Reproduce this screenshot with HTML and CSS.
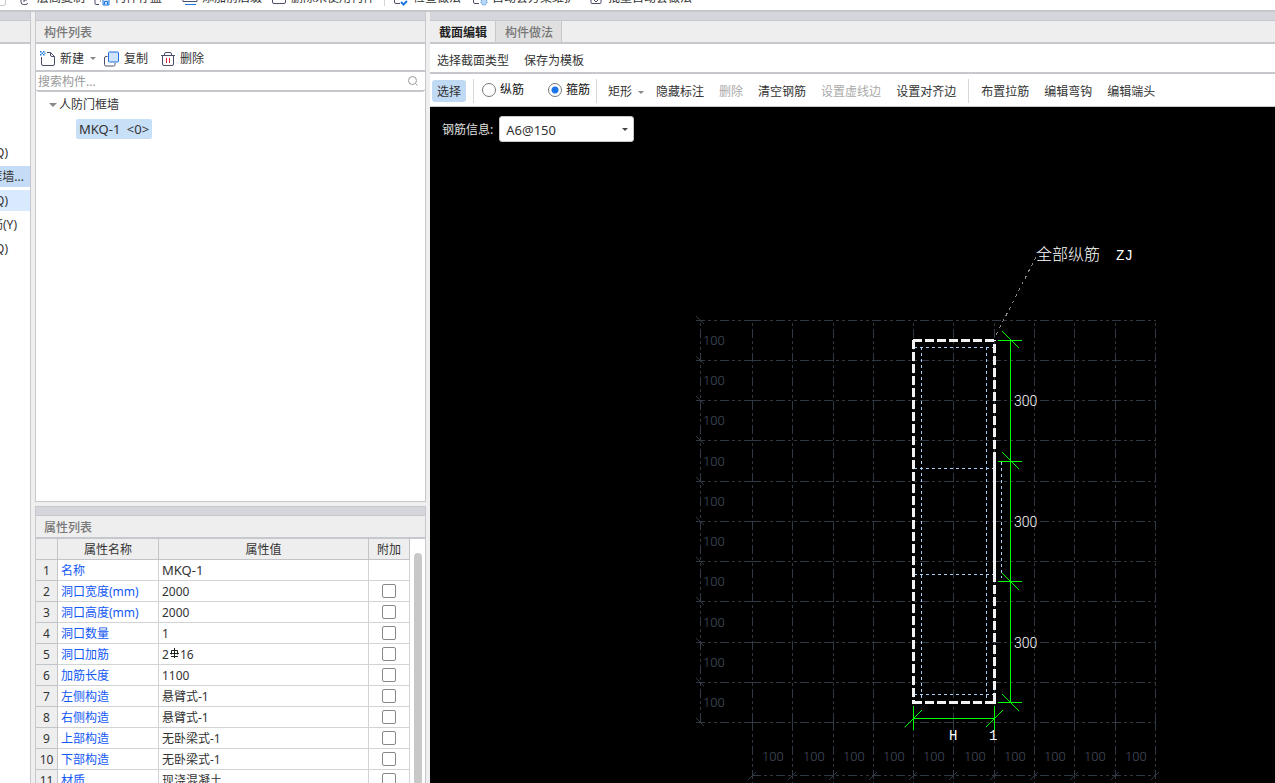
FILE: index.html
```
<!DOCTYPE html>
<html lang="zh-CN">
<head>
<meta charset="utf-8">
<title>截面编辑</title>
<link rel="stylesheet" href="styles.css">
</head>
<body>
<header class="ribbon">
  <span class="ribbon-edge"></span>
  <button class="ribbon-item"><svg class="ricon" viewBox="0 0 16 16"><path d="M4 5v7q0 2.500 2.500 2.500h2q2 0 2-1.500M10 10h-3v2"/></svg>层高复制</button>
  <button class="ribbon-item"><svg class="ricon" viewBox="0 0 16 16"><path d="M1 8v5.500q0 1 1 1h3M6 11h1"/><path class="blue tint" d="M9 6.500h6v8.500H9zM10.500 14.500v-3h3v3"/></svg>构件存盘</button>
  <button class="ribbon-item gap-lg"><svg class="ricon" viewBox="0 0 16 16"><path d="M1 9v2.500h14V9"/><path class="blue" d="M3 14.500h11"/></svg>添加前后缀</button>
  <button class="ribbon-item"><svg class="ricon" viewBox="0 0 16 16"><path d="M1.500 6v6q0 1.500 1.500 1.500h10q1.500 0 1.500-1.500V6"/></svg>删除未使用构件</button>
  <span class="ribbon-sep"></span>
  <button class="ribbon-item"><svg class="ricon" viewBox="0 0 16 16"><path d="M1.500 6v6q0 1.500 1.500 1.500h4"/><path class="blue thick" d="M8 12l2.500 2.500L14 11"/></svg>检查做法</button>
  <button class="ribbon-item gap-sm"><svg class="ricon" viewBox="0 0 16 16"><path d="M1.500 6v6q0 1.500 1.500 1.500h4"/><circle class="blue soft" cx="12" cy="12" r="3"/></svg>自动套方案维护</button>
  <button class="ribbon-item gap-md"><svg class="ricon" viewBox="0 0 16 16"><path d="M3 6v6.500q0 1 1 1h8q1 0 1-1V6M6 10l2 2 2-2"/></svg>批量自动套做法</button>
</header>

<main class="workspace">
  <aside class="nav-panel">
    <div class="grip"></div>
    <div class="panel-head"></div>
    <ul class="nav-list">
      <li class="nav-row">(Q)</li>
      <li class="nav-row current in-wide">框墙...</li>
      <li class="nav-row hover">(Q)</li>
      <li class="nav-row in-mid">筋(Y)</li>
      <li class="nav-row">(Q)</li>
    </ul>
  </aside>

  <div class="side">
    <section class="panel component-panel">
      <div class="grip"></div>
      <h2 class="panel-head">构件列表</h2>
      <div class="tools">
        <button class="tool"><svg class="icon" viewBox="0 0 16 16"><path class="ink" d="M1.500 6v7q0 1.500 1.500 1.500h10q1.500 0 1.500-1.500V5.500L10.500 1.500H7M10.500 1.500V4q0 1.500 1.500 1.500h2.500"/><path class="checks" d="M0 0h1.500v1.500H0zM3 0h1.500v1.500H3zM1.500 1.500H3V3H1.500zM0 3h1.500v1.500H0zM3 3h1.500v1.500H3zM4.500 1.500h1V3h-1z"/></svg>新建<i class="caret"></i></button>
        <button class="tool"><svg class="icon" viewBox="0 0 16 16"><path class="ink" d="M3.500 5.500H2Q.500 5.500.500 7v6.500Q.500 15 2 15h7.500q1.500 0 1.500-1.500V12"/><rect class="copy-front" x="4.500" y="1" width="10" height="10" rx="1"/></svg>复制</button>
        <button class="tool tool-delete"><svg class="icon" viewBox="0 0 16 16"><path class="ink" d="M1 4.500h14M4.500 4.500V3q0-1.500 1.500-1.500h4q1.500 0 1.500 1.500v1.500M2.500 4.500V13q0 1.500 1.500 1.500h8q1.500 0 1.500-1.500V4.500"/><path class="red" d="M6.500 7v5M9.500 7v5"/></svg>删除</button>
      </div>
      <label class="search">
        <input class="search-input" type="text" placeholder="搜索构件..." aria-label="搜索构件">
        <svg class="search-icon" viewBox="0 0 12 12"><circle cx="5.500" cy="5.500" r="4"/><path d="M8.500 8.500l2 2"/></svg>
      </label>
      <ul class="tree">
        <li class="tree-row"><i class="caret caret-tree"></i>人防门框墙</li>
        <li class="tree-row tree-child"><span class="chip">MKQ-1&ensp;&lt;0&gt;</span></li>
      </ul>
    </section>

    <section class="panel property-panel">
      <div class="grip"></div>
      <h2 class="panel-head">属性列表</h2>
      <div class="sheet-wrap">
        <table class="sheet">
          <colgroup><col class="c-num"><col class="c-name"><col class="c-value"><col class="c-extra"></colgroup>
          <thead><tr><th></th><th>属性名称</th><th>属性值</th><th>附加</th></tr></thead>
          <tbody>
            <tr><th>1</th><td class="name">名称</td><td class="latin">MKQ-1</td><td></td></tr>
            <tr><th>2</th><td class="name">洞口宽度(mm)</td><td>2000</td><td class="extra"><input type="checkbox" aria-label="附加 洞口宽度"></td></tr>
            <tr><th>3</th><td class="name">洞口高度(mm)</td><td>2000</td><td class="extra"><input type="checkbox" aria-label="附加 洞口高度"></td></tr>
            <tr><th>4</th><td class="name">洞口数量</td><td>1</td><td class="extra"><input type="checkbox" aria-label="附加 洞口数量"></td></tr>
            <tr><th>5</th><td class="name">洞口加筋</td><td>2<svg class="rebar" viewBox="0 0 11 11"><path d="M5.500 0v10M2 8.500h7M2.500 2.500h6M1 5.500h9M2.500 2.500v4M8.500 2.500v4"/></svg>16</td><td class="extra"><input type="checkbox" aria-label="附加 洞口加筋"></td></tr>
            <tr><th>6</th><td class="name">加筋长度</td><td>1100</td><td class="extra"><input type="checkbox" aria-label="附加 加筋长度"></td></tr>
            <tr><th>7</th><td class="name">左侧构造</td><td>悬臂式-1</td><td class="extra"><input type="checkbox" aria-label="附加 左侧构造"></td></tr>
            <tr><th>8</th><td class="name">右侧构造</td><td>悬臂式-1</td><td class="extra"><input type="checkbox" aria-label="附加 右侧构造"></td></tr>
            <tr><th>9</th><td class="name">上部构造</td><td>无卧梁式-1</td><td class="extra"><input type="checkbox" aria-label="附加 上部构造"></td></tr>
            <tr><th>10</th><td class="name">下部构造</td><td>无卧梁式-1</td><td class="extra"><input type="checkbox" aria-label="附加 下部构造"></td></tr>
            <tr><th>11</th><td class="name">材质</td><td>现浇混凝土</td><td class="extra"><input type="checkbox" aria-label="附加 材质"></td></tr>
          </tbody>
        </table>
        <div class="scroll-track"><div class="scroll-thumb"></div></div>
      </div>
    </section>
  </div>

  <section class="editor">
    <div class="grip"></div>
    <div class="tabs" role="tablist">
      <button class="tab active" role="tab">截面编辑</button>
      <button class="tab" role="tab">构件做法</button>
    </div>
    <div class="bar bar-top">
      <button class="cmd">选择截面类型</button>
      <button class="cmd">保存为模板</button>
    </div>
    <div class="bar bar-main">
      <button class="cmd pressed">选择</button>
      <span class="sep"></span>
      <label class="radio"><input type="radio" name="kind">纵筋</label>
      <label class="radio"><input type="radio" name="kind" checked>箍筋</label>
      <span class="sep sep-tight"></span>
      <button class="cmd">矩形<i class="caret"></i></button>
      <button class="cmd">隐藏标注</button>
      <button class="cmd" disabled>删除</button>
      <button class="cmd">清空钢筋</button>
      <button class="cmd" disabled>设置虚线边</button>
      <button class="cmd">设置对齐边</button>
      <span class="sep sep-wide"></span>
      <button class="cmd">布置拉筋</button>
      <button class="cmd">编辑弯钩</button>
      <button class="cmd">编辑端头</button>
    </div>
    <div class="canvas">
      <div class="rebar-info">
        <label for="rebar-select">钢筋信息:</label>
        <span class="select-box"><select id="rebar-select"><option>A6@150</option></select><i class="caret caret-dark"></i></span>
      </div>
      <svg class="drawing">
        <g transform="translate(-430 -107)">
          <g class="grid">
            <path d="M696 320.500H752M696 360.500H752M696 400.500H752M696 440.500H752M696 481.500H752M696 521.500H752M696 561.500H752M696 601.500H752M696 642.500H752M696 682.500H752M696 722.500H752"/>
            <path d="M752 320.500H1156M752 360.500H1156M752 400.500H1156M752 440.500H1156M752 481.500H1156M752 521.500H1156M752 561.500H1156M752 601.500H1156M752 642.500H1156M752 682.500H1156M752 722.500H1156M752 775.500H1156"/>
            <path d="M700.500 722V320M752.500 722V323M792.500 722V323M833.500 722V323M873.500 722V323M913.500 722V323M953.500 722V323M994.500 722V323M1034.500 722V323M1074.500 722V323M1115.500 722V323M1155.500 722V323"/>
            <path d="M752.500 722V783M792.500 722V783M833.500 722V783M873.500 722V783M913.500 722V783M953.500 722V783M994.500 722V783M1034.500 722V783M1074.500 722V783M1115.500 722V783M1155.500 722V783"/>
            <path class="solid" d="M696 316l8 8M696 356l8 8M696 396l8 8M696 436l8 8M696 477l8 8M696 517l8 8M696 557l8 8M696 597l8 8M696 638l8 8M696 678l8 8M696 718l8 8M748 780l8-8M788 780l8-8M829 780l8-8M869 780l8-8M909 780l8-8M949 780l8-8M990 780l8-8M1030 780l8-8M1070 780l8-8M1111 780l8-8M1151 780l8-8"/>
          </g>
          <g class="grid-text">
            <text x="703" y="345">100</text><text x="703" y="385">100</text><text x="703" y="425">100</text><text x="703" y="466">100</text><text x="703" y="506">100</text><text x="703" y="546">100</text><text x="703" y="586">100</text><text x="703" y="627">100</text><text x="703" y="667">100</text><text x="703" y="707">100</text>
            <text x="762" y="761">100</text><text x="803" y="761">100</text><text x="843" y="761">100</text><text x="883" y="761">100</text><text x="923" y="761">100</text><text x="964" y="761">100</text><text x="1004" y="761">100</text><text x="1044" y="761">100</text><text x="1084" y="761">100</text><text x="1125" y="761">100</text>
          </g>
          <path class="stirrup" d="M914 347.500H993M914 468.500H993M914 574.500H993M914 694.500H993M921.500 347V702M986.500 347V702M1001.500 462V578"/>
          <path class="outline dashed" d="M913 340.500H995M913.500 340V704M994.500 461V340M994.500 702V581M913 702.500H995"/>
          <path class="outline" d="M994.500 461V581M994.500 702v2"/>
          <path class="dimension" d="M1010.500 340V703M998 340.500h24M998 461.500h24M998 581.500h24M998 702.500h24M913 718.500H995M913.500 706v24M994.500 706v24"/>
          <path class="dimension" d="M1002 331l17 17M1002 452l17 17M1002 573l17 17M1002 694l17 17M905 727l17-17M986 727l17-17"/>
          <path class="leader" d="M1036 257L995 337"/>
          <g class="label">
            <text x="1036" y="260">全部纵筋</text>
            <text class="mono" x="1116" y="260">ZJ</text>
            <text class="num" x="1014" y="406">300</text>
            <text class="num" x="1014" y="527">300</text>
            <text class="num" x="1014" y="648">300</text>
            <text class="mono" x="949" y="740">H</text>
            <text class="mono" x="989" y="740">1</text>
          </g>
        </g>
      </svg>
    </div>
  </section>
</main>
</body>
</html>
```
FILE: styles.css
```
* { box-sizing: border-box; }

body {
  margin: 0;
  height: 100vh;
  display: flex;
  flex-direction: column;
  overflow: hidden;
  background: #efefef;
  color: #333;
  font: 12px/16px "Noto Sans", "Noto Sans CJK SC", sans-serif;
}

button {
  border: 0;
  padding: 0;
  background: none;
  color: inherit;
  font: inherit;
  white-space: nowrap;
}

ul { list-style: none; margin: 0; padding: 0; }
h2 { margin: 0; }

/* Ribbon */
.ribbon {
  flex: none;
  display: flex;
  align-items: flex-end;
  height: 12px;
  padding-bottom: 4px;
  overflow: hidden;
  background: #fff;
  border-bottom: 2px solid #c6c8cd;
}
.ribbon-edge {
  width: 6px;
  height: 14px;
  margin-right: 11px;
  border: 1px solid #c6c8cd;
  border-left: 0;
  border-radius: 0 0 3px 0;
}
.ribbon-item {
  display: flex;
  align-items: center;
  gap: 4px;
  margin-right: 9px;
}
.gap-sm { margin-left: 2px; }
.gap-md { margin-left: 3px; }
.gap-lg { margin-left: 11px; }
.ribbon-sep { width: 1px; height: 16px; margin-right: 8px; background: #d5d5d5; }
.ricon { width: 16px; height: 16px; fill: none; stroke: #4a4e69; }
.ricon .blue { stroke: #1f78e0; }
.ricon .tint { fill: #cfe3fb; }
.ricon .thick { stroke-width: 2; }
.ricon .soft { fill: #b8d6f8; stroke-dasharray: 1 1; }

/* Panels */
.workspace { flex: 1; display: flex; min-height: 0; }
.grip {
  flex: none;
  height: 9px;
  background: #d4d6db;
  border-bottom: 1px solid #c6c8cd;
}
.panel-head {
  flex: none;
  height: 23px;
  padding: 2px 8px 0;
  border-bottom: 2px solid #c6c8cd;
  background: #eee;
  color: #777;
  font-size: 12px;
  line-height: 19px;
  font-weight: 500;
}
.nav-panel {
  flex: none;
  display: flex;
  flex-direction: column;
  width: 31px;
  background: #fff;
  border-right: 1px solid #c6c8cd;
}
.nav-list {
  display: flex;
  flex-direction: column;
  gap: 3px;
  padding-top: 98px;
  overflow: hidden;
}
.nav-row {
  display: flex;
  justify-content: flex-end;
  align-items: center;
  height: 21px;
  padding-right: 22px;
  white-space: nowrap;
}
.nav-row.in-wide { padding-right: 6px; }
.nav-row.in-mid { padding-right: 13px; }
.nav-row.current { background: #c5dcf7; }
.nav-row.hover { background: #d9eaff; }

.side {
  flex: none;
  display: flex;
  flex-direction: column;
  gap: 4px;
  width: 391px;
  margin: 0 4px;
}
.panel {
  display: flex;
  flex-direction: column;
  border: 1px solid #c6c8cd;
  border-top: 0;
  background: #fff;
  min-height: 0;
}
.component-panel { flex: 490; }
.property-panel { flex: 277; border-top: 1px solid #c6c8cd; border-bottom: 0; }

.tools {
  flex: none;
  display: flex;
  align-items: center;
  gap: 8px;
  height: 28px;
  padding: 3px 0 0 4px;
  border-bottom: 2px solid #c6c8cd;
}
.tool { display: flex; align-items: center; gap: 4px; }
.tool-delete { margin-left: 4px; }
.icon { width: 16px; height: 16px; fill: none; }
.ink { stroke: #4a4e69; }
.red { stroke: #d8262c; }
.checks { fill: #1f78e0; }
.copy-front { fill: #cfe3fb; stroke: #1f6fe0; }

.caret {
  width: 0;
  height: 0;
  border: 3px solid transparent;
  border-top-color: #888;
  border-bottom: 0;
}
.tool .caret { margin-left: 2px; }

.search {
  flex: none;
  display: flex;
  align-items: center;
  height: 20px;
  padding: 0 6px 0 2px;
  border-bottom: 2px solid #c6c8cd;
  border-radius: 3px;
}
.search-input {
  flex: 1;
  min-width: 0;
  height: 18px;
  border: 0;
  padding: 0;
  outline: 0;
  background: none;
  font: inherit;
}
.search-input::placeholder { color: #999; }
.search-icon { width: 12px; height: 12px; fill: none; stroke: #999; }

.tree-row { display: flex; align-items: center; height: 24px; padding: 1px 0 0 13px; }
.tree-child { padding-left: 40px; }
.chip {
  padding: 2px 3px;
  border-radius: 2px;
  background: #c8dff8;
  font-size: 13px;
}
.caret-tree { margin-right: 2px; border-width: 4px; border-bottom-width: 0; }

/* Property sheet */
.sheet-wrap { flex: 1; display: flex; min-height: 0; overflow: hidden; }
.sheet {
  flex: 1;
  align-self: flex-start;
  table-layout: fixed;
  border-spacing: 0;
}
.c-num { width: 22px; }
.c-name { width: 101px; }
.c-extra { width: 41px; }
.sheet th, .sheet td {
  height: 21px;
  padding: 2px 3px 0;
  border-right: 1px solid #d2d3d5;
  border-bottom: 1px solid #d2d3d5;
  line-height: 18px;
  white-space: nowrap;
}
.sheet th {
  padding: 2px 0 0;
  border-color: #c2c4c8;
  background: #eee;
  font-weight: 400;
  text-align: center;
}
.sheet .name { color: #1258f5; }
.sheet .latin { padding-top: 0; font-size: 13px; }
.sheet .extra { padding-top: 0; text-align: center; }
.extra input {
  appearance: none;
  display: block;
  width: 14px;
  height: 14px;
  margin: 0 auto;
  border: 1px solid #888;
  border-radius: 2px;
  background: #fff;
}
.rebar { width: 11px; height: 11px; fill: none; stroke: #222; }
.scroll-track { flex: none; width: 15px; padding: 14px 3px 0 4px; }
.scroll-thumb { height: 100%; border-radius: 4px 4px 0 0; background: #c8c8c8; }

/* Section editor */
.editor { flex: 1; display: flex; flex-direction: column; min-width: 0; }
.tabs {
  flex: none;
  display: flex;
  height: 23px;
  border-bottom: 2px solid #c6c8cd;
  background: #eee;
}
.tab {
  padding: 2px 8px 0 9px;
  border-right: 1px solid #c6c8cd;
  background: #e0e0e0;
  color: #777;
  font-weight: 500;
}
.tab.active { background: #eee; color: #222; font-weight: 700; }
.bar { flex: none; display: flex; align-items: center; background: #fff; }
.bar-top { gap: 15px; height: 30px; padding: 4px 7px 0; border-bottom: 2px solid #c6c8cd; }
.bar-main { gap: 15px; height: 33px; padding: 2px 2px 0; border-bottom: 1px solid #c6c8cd; }
.cmd { display: flex; align-items: center; padding-top: 2px; }
.cmd:disabled { color: #aaa; }
.cmd .caret { margin-left: 6px; margin-right: -3px; }
.pressed { height: 22px; padding: 2px 5px 0; margin-right: -8px; border-radius: 3px; background: #c1daf3; }
.sep { width: 1px; height: 24px; margin-right: -7px; background: #d8d8d8; }
.sep-tight { margin-left: -9px; margin-right: -4px; }
.sep-wide { margin: 0 -3px; }
.radio { display: flex; align-items: center; gap: 4px; padding-bottom: 3px; color: #111; }
.radio + .radio { margin-left: 9px; }
.radio input {
  appearance: none;
  width: 14px;
  height: 14px;
  margin: 0;
  border: 1px solid #777;
  border-radius: 50%;
  background: #fff;
}
.radio input:checked { background: radial-gradient(circle, #1a73e8 0 3px, #fff 4px); }

.canvas { flex: 1; position: relative; min-height: 0; overflow: hidden; background: #000; }
.drawing { display: block; width: 100%; height: 100%; }
.rebar-info {
  position: absolute;
  top: 9px;
  left: 12px;
  display: flex;
  align-items: center;
  gap: 6px;
  color: #e0e0e0;
}
.rebar-info label { padding-top: 2px; }
.select-box { display: grid; align-items: center; justify-items: end; }
.select-box > * { grid-area: 1 / 1; }
.select-box select {
  appearance: none;
  width: 135px;
  height: 26px;
  padding: 1px 6px 0;
  border: 1px solid #c6c8cd;
  border-radius: 3px;
  background: #fff;
  color: #333;
  font: inherit;
  font-size: 13px;
}
.caret-dark { margin-right: 6px; border-top-color: #444; pointer-events: none; }

/* Drawing */
.drawing path { fill: none; shape-rendering: crispEdges; }
.grid path { stroke: #303844; stroke-dasharray: 9 3 3 3 3 3; }
.grid .solid { stroke-dasharray: none; }
.grid-text { fill: #465160; font: 300 13px Roboto, sans-serif; }
.stirrup { stroke: #a6cdf5; stroke-dasharray: 3 3; }
.outline { stroke: #f2f2f2; stroke-width: 3; }
.outline.dashed { stroke-dasharray: 9 3; }
.dimension { stroke: #0f0; }
.leader { stroke: #888; stroke-dasharray: 3 4; }
.label { fill: #fff; font: 300 16px "Noto Sans CJK SC", sans-serif; }
.label .num { font: 300 14px Roboto, sans-serif; }
.label .mono { font: 14px "Liberation Mono", monospace; }
```
